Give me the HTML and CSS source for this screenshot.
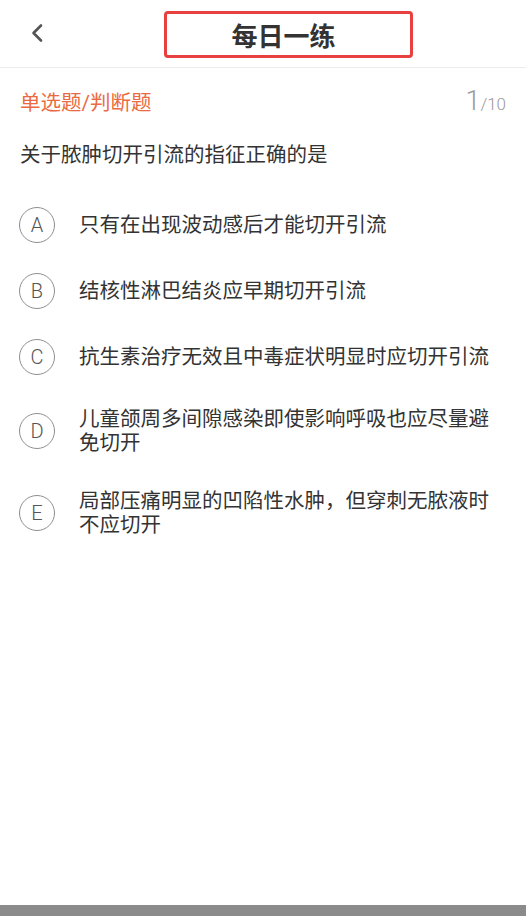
FILE: index.html
```html
<!DOCTYPE html>
<html lang="zh-CN">
<head>
<meta charset="utf-8">
<title>每日一练</title>
<link rel="stylesheet" href="styles.css">
</head>
<body>
<div class="page">
  <header class="header">
    <div class="back">
      <svg width="14" height="20" viewBox="0 0 14 20"><path d="M11 2.5 L3.5 10 L11 17.5" fill="none" stroke="#555" stroke-width="2.6" stroke-linecap="round" stroke-linejoin="round"/></svg>
    </div>
    <div class="title-box"><h1 class="title">每日一练</h1></div>
  </header>
  <main class="content">
    <div class="meta">
      <span class="type">单选题/判断题</span>
      <span class="count"><span class="cur">1</span><span class="total">/10</span></span>
    </div>
    <p class="question">关于脓肿切开引流的指征正确的是</p>
    <ul class="options">
      <li class="option"><span class="mark">A</span><span class="text">只有在出现波动感后才能切开引流</span></li>
      <li class="option"><span class="mark">B</span><span class="text">结核性淋巴结炎应早期切开引流</span></li>
      <li class="option"><span class="mark">C</span><span class="text">抗生素治疗无效且中毒症状明显时应切开引流</span></li>
      <li class="option"><span class="mark">D</span><span class="text">儿童颌周多间隙感染即使影响呼吸也应尽量避免切开</span></li>
      <li class="option"><span class="mark">E</span><span class="text">局部压痛明显的凹陷性水肿，但穿刺无脓液时不应切开</span></li>
    </ul>
  </main>
  <div class="bottom-bar"></div>
</div>
</body>
</html>
```

FILE: styles.css
```css
* { box-sizing: border-box; }
html, body { margin: 0; padding: 0; background: #fff; }
body {
  font-family: Roboto, "Noto Sans CJK SC", "Noto Sans", sans-serif;
  color: #333;
}
.page {
  width: 526px;
  height: 916px;
  display: flex;
  flex-direction: column;
}
.header {
  height: 68px;
  border-bottom: 1px solid #ececec;
  display: flex;
  align-items: flex-start;
  flex-shrink: 0;
}
.back {
  width: 164px;
  padding-left: 30px;
  padding-top: 23px;
  display: flex;
}
.title-box {
  margin-top: 11px;
  width: 249px;
  height: 47px;
  border: 3px solid #e8403f;
  border-radius: 4px;
  display: flex;
  align-items: center;
  justify-content: center;
  padding-right: 10px;
}
.title {
  margin: 0;
  font-family: "Noto Sans CJK SC", sans-serif;
  font-size: 26px;
  font-weight: 700;
  color: #333;
  line-height: 30px;
}
.content {
  flex: 1;
  padding: 0 20px 0 20px;
}
.meta {
  display: flex;
  justify-content: space-between;
  align-items: baseline;
  margin-top: 18px;
  height: 30px;
}
.type {
  font-size: 20.5px;
  color: #ea6a42;
  line-height: 30px;
}
.count { color: #999; font-weight: 300; }
.cur { font-size: 27px; line-height: 30px; }
.total { font-size: 17px; }
.question {
  margin: 27px 0 0 0;
  font-size: 20.5px;
  line-height: 24px;
  color: #333;
}
.options {
  list-style: none;
  margin: 40px 0 0 0;
  padding: 0;
  display: flex;
  flex-direction: column;
  gap: 30px;
}
.option {
  display: flex;
  align-items: center;
  min-height: 36px;
}
.mark {
  flex-shrink: 0;
  width: 36px;
  height: 36px;
  border: 1.5px solid #8f8f8f;
  border-radius: 50%;
  display: flex;
  align-items: center;
  justify-content: center;
  font-family: Roboto, sans-serif;
  font-size: 20px;
  font-weight: 300;
  color: #555;
  margin-left: -1px;
}
.text {
  margin-left: 24px;
  width: 418px;
  font-size: 20.5px;
  line-height: 24px;
  padding: 2px 0;
  color: #333;
}
.bottom-bar {
  height: 11px;
  flex-shrink: 0;
  background: #8b8b8b;
}
```
